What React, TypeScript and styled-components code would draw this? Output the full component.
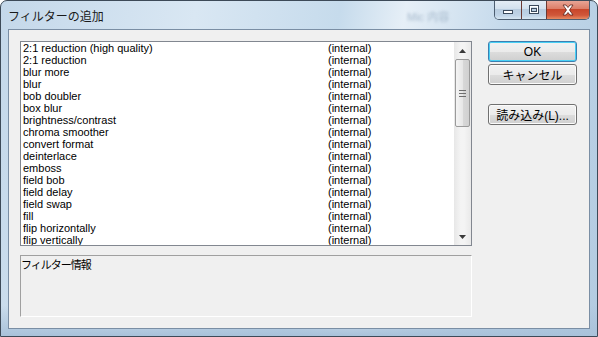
import React from "react";
import styled, { createGlobalStyle } from "styled-components";

const GlobalStyle = createGlobalStyle`
  html, body { margin: 0; padding: 0; background: #ffffff; }
  body { width: 598px; height: 337px; overflow: hidden; }
`;

const uiFont = `"Liberation Sans", "Noto Sans CJK JP", sans-serif`;
const jpFont = `"Noto Sans CJK JP", "Liberation Sans", sans-serif`;

const Window = styled.div`
  width: 598px;
  height: 337px;
  box-sizing: border-box;
  display: flex;
  flex-direction: column;
  border: 1px solid #3d4a58;
  border-radius: 7px 7px 0 0;
  overflow: hidden;
  background: linear-gradient(
    100deg,
    #c4d8ea 0%,
    #d9e7f3 30%,
    #c6dbec 52%,
    #e6eff7 62%,
    #c4d9eb 78%,
    #b3cbe1 100%
  );
`;

const TitleBar = styled.div`
  height: 28px;
  flex: none;
  display: flex;
  align-items: center;
  padding: 0 7px 0 7px;
  position: relative;
`;

const Title = styled.span`
  font-family: ${jpFont};
  font-size: 12px;
  color: #1a1a1a;
`;

const GhostText = styled.span`
  position: absolute;
  left: 406px;
  top: 7px;
  font-family: ${uiFont};
  font-size: 11px;
  color: #8ea4ba;
  filter: blur(1.4px);
  opacity: 0.7;
`;

const Caption = styled.div`
  margin-left: auto;
  align-self: flex-start;
  display: flex;
  height: 19px;
  margin-top: -1px;
  border: 1px solid #4c5d70;
  border-top: none;
  border-radius: 0 0 5px 5px;
  overflow: hidden;
`;

const CapBtn = styled.div<{ $close?: boolean; $w: number }>`
  width: ${(p) => p.$w}px;
  height: 100%;
  display: flex;
  align-items: center;
  justify-content: center;
  box-sizing: border-box;
  & + & { border-left: 1px solid ${(p) => (p.$close ? "#6b3a33" : "#7d90a5")}; }
  background: ${(p) =>
    p.$close
      ? "linear-gradient(#e9a99b 0%, #dc7f69 45%, #c8462b 50%, #d0573a 80%, #e88a62 100%)"
      : "linear-gradient(#e6eef6 0%, #d3e1ee 45%, #b9cde0 50%, #bfd3e6 80%, #d6e6f2 100%)"};
`;

const Body = styled.div`
  flex: 1;
  display: flex;
  padding: 0 7px 7px 7px;
  background: linear-gradient(180deg, transparent 0%, transparent 90%, #a9c2da 100%);
`;

const Client = styled.div`
  flex: 1;
  display: flex;
  gap: 16px;
  background: #f0f0f0;
  border: 1px solid #7a8ea4;
  padding: 11px 0 0 11px;
`;

const LeftCol = styled.div`
  width: 452px;
  display: flex;
  flex-direction: column;
  gap: 9px;
`;

const ListBox = styled.div`
  height: 205px;
  box-sizing: border-box;
  border: 1px solid #828790;
  background: #ffffff;
  display: flex;
`;

const Rows = styled.div`
  flex: 1;
  overflow: hidden;
`;

const Row = styled.div`
  height: 12px;
  line-height: 12px;
  display: grid;
  grid-template-columns: 305px 1fr;
  padding-left: 2px;
  font-family: ${uiFont};
  font-size: 11px;
  color: #000;
  white-space: nowrap;
`;

const ScrollBar = styled.div`
  width: 17px;
  display: flex;
  flex-direction: column;
  background: linear-gradient(90deg, #e7e7e7, #f4f4f4 40%, #f4f4f4 60%, #e9e9e9);
`;

const ArrowBtn = styled.div`
  height: 17px;
  display: flex;
  align-items: center;
  justify-content: center;
`;

const Track = styled.div`
  flex: 1;
  display: flex;
  flex-direction: column;
`;

const Thumb = styled.div`
  height: 68px;
  margin: 0 1px;
  box-sizing: border-box;
  border: 1px solid #9a9a9a;
  border-radius: 2px;
  background: linear-gradient(90deg, #f4f4f4 0%, #e7e7e7 50%, #d8d8d8 51%, #d0d0d0 100%);
  display: flex;
  align-items: center;
  justify-content: center;
`;

const InfoBox = styled.div`
  height: 62px;
  box-sizing: border-box;
  border-top: 1px solid #a0a0a0;
  border-left: 1px solid #a0a0a0;
  border-right: 1px solid #ffffff;
  border-bottom: 1px solid #ffffff;
  padding: 1px 0 0 0;
  font-family: ${jpFont};
  font-size: 11px;
  letter-spacing: -1px;
  line-height: 14px;
  color: #000;
`;

const RightCol = styled.div`
  width: 89px;
  display: flex;
  flex-direction: column;
  gap: 2px;
`;

const Button = styled.div<{ $default?: boolean; $gapTop?: number }>`
  height: 21px;
  box-sizing: border-box;
  margin-top: ${(p) => p.$gapTop ?? 0}px;
  border: 1px solid ${(p) => (p.$default ? "#3c7fb1" : "#707070")};
  box-shadow: ${(p) => (p.$default ? "inset 0 0 0 1px #48d0f5" : "inset 0 0 0 1px #fbfbfb")};
  border-radius: 3px;
  background: linear-gradient(#f2f2f2 0%, #ebebeb 50%, #dddddd 51%, #cfcfcf 100%);
  display: flex;
  align-items: center;
  justify-content: center;
  font-family: ${uiFont};
  font-size: 12px;
  color: #000;
`;

const items = [
  "2:1 reduction (high quality)",
  "2:1 reduction",
  "blur more",
  "blur",
  "bob doubler",
  "box blur",
  "brightness/contrast",
  "chroma smoother",
  "convert format",
  "deinterlace",
  "emboss",
  "field bob",
  "field delay",
  "field swap",
  "fill",
  "flip horizontally",
  "flip vertically",
];

const MinIcon = () => (
  <svg width="12" height="10" viewBox="0 0 12 10">
    <rect x="1.5" y="5.5" width="9" height="3" fill="#fff" stroke="#3b4a5c" />
  </svg>
);

const MaxIcon = () => (
  <svg width="12" height="10" viewBox="0 0 12 10">
    <rect x="1.5" y="0.5" width="9" height="8" fill="none" stroke="#3b4a5c" />
    <rect x="2.5" y="1.5" width="7" height="6" fill="none" stroke="#fff" />
    <rect x="3.5" y="3.5" width="5" height="3" fill="none" stroke="#3b4a5c" />
  </svg>
);

const CloseIcon = () => (
  <svg width="14" height="12" viewBox="0 0 14 12">
    <path
      d="M2 1 L5 1 L7 3.5 L9 1 L12 1 L8.5 6 L12 11 L9 11 L7 8.5 L5 11 L2 11 L5.5 6 Z"
      fill="#fff"
      stroke="#5a2219"
      strokeWidth="0.8"
    />
  </svg>
);

const UpArrow = () => (
  <svg width="7" height="4" viewBox="0 0 7 4">
    <path d="M0 4 L3.5 0 L7 4 Z" fill="#3a3a3a" />
  </svg>
);

const DownArrow = () => (
  <svg width="7" height="4" viewBox="0 0 7 4">
    <path d="M0 0 L3.5 4 L7 0 Z" fill="#3a3a3a" />
  </svg>
);

const Grip = () => (
  <svg width="7" height="7" viewBox="0 0 7 7">
    <path d="M0 0.5 H7 M0 3.5 H7 M0 6.5 H7" stroke="#6e6e6e" strokeWidth="1" />
  </svg>
);

export default function App() {
  return (
    <>
      <GlobalStyle />
      <Window>
        <TitleBar>
          <Title>フィルターの追加</Title>
          <GhostText>Mic 内容</GhostText>
          <Caption>
            <CapBtn $w={26}>
              <MinIcon />
            </CapBtn>
            <CapBtn $w={25}>
              <MaxIcon />
            </CapBtn>
            <CapBtn $w={43} $close>
              <CloseIcon />
            </CapBtn>
          </Caption>
        </TitleBar>
        <Body>
          <Client>
            <LeftCol>
              <ListBox>
                <Rows>
                  {items.map((name) => (
                    <Row key={name}>
                      <span>{name}</span>
                      <span>(internal)</span>
                    </Row>
                  ))}
                </Rows>
                <ScrollBar>
                  <ArrowBtn>
                    <UpArrow />
                  </ArrowBtn>
                  <Track>
                    <Thumb>
                      <Grip />
                    </Thumb>
                  </Track>
                  <ArrowBtn>
                    <DownArrow />
                  </ArrowBtn>
                </ScrollBar>
              </ListBox>
              <InfoBox>フィルター情報</InfoBox>
            </LeftCol>
            <RightCol>
              <Button $default>OK</Button>
              <Button>キャンセル</Button>
              <Button $gapTop={17}>読み込み(L)...</Button>
            </RightCol>
          </Client>
        </Body>
      </Window>
    </>
  );
}
